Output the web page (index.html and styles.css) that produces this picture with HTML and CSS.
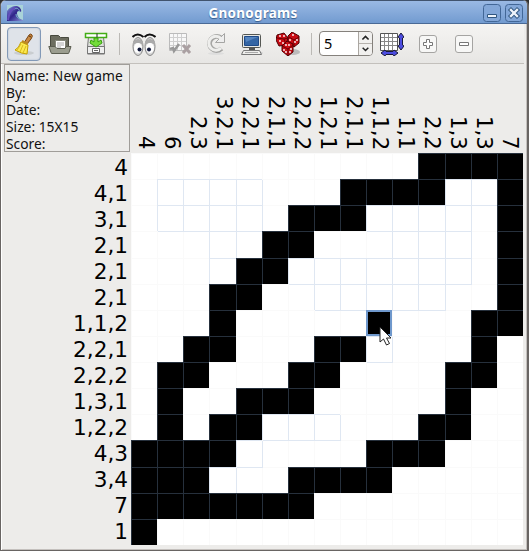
FILE: index.html
```html
<!DOCTYPE html>
<html lang="en">
<head>
<meta charset="utf-8">
<title>Gnonograms</title>
<link rel="stylesheet" href="styles.css">
</head>
<body>
<div class="window">
  <header class="titlebar">
    <svg class="appicon" width="16" height="16" viewBox="0 0 16 16"><defs><linearGradient id="wave" x2="1" y2="1"><stop stop-color="#8193db"/><stop offset=".5" stop-color="#30248a"/><stop offset="1" stop-color="#8495d7"/></linearGradient></defs><path fill="#a9d3d9" d="M0 0h16v16H0z"/><path fill="url(#wave)" d="M0 16V6C2 3 5 1 10 1c3 1 5 4 4 6-2-2-4-1-4 1 0 3 2 6 6 7v1z"/><path d="M7 4c4-2 6 1 5 3M9 9c0 3 2 4 4 5" fill="none" stroke="#75b6ca"/><path d="M1 15C2 8 4 4 8 3" fill="none" stroke="#634ebc" stroke-width="2"/></svg>
    <h1>Gnonograms</h1>
    <div class="controls">
      <svg width="18" height="18" viewBox="0 0 18 18"><rect class="wb" x=".5" y=".5" width="17" height="17" rx="3"/><path d="M4.500 10.500h9v3h-9z" fill="#eef4fb" stroke="#315781"/></svg>
      <svg width="18" height="18" viewBox="0 0 18 18"><rect class="wb" x=".5" y=".5" width="17" height="17" rx="3"/><path d="M6 6l6 6m0-6l-6 6" stroke="#315781" stroke-width="4.400" stroke-linecap="square"/><path d="M6 6l6 6m0-6l-6 6" stroke="#eef4fb" stroke-width="2.400" stroke-linecap="square"/></svg>
    </div>
  </header>
  <nav class="toolbar">
    <span class="tool pressed"><svg width="24" height="24" viewBox="0 0 24 24"><ellipse cx="12" cy="21" rx="10" ry="2" fill="#c9cdd0"/><path d="M12.500 10L17 3q2-2 3 0 1 1-1 4l-4 5z" fill="#c88942" stroke="#7a4513"/><path d="M17 4l2 1" stroke="#5c3510"/><path d="M9 10l7 3-1 9q-5 0-12-4 4-2 6-8z" fill="#fce94f" stroke="#c4a000"/><path d="M9 12l-4 6m6-5l-3 7m6-6l-3 7" stroke="#d7b91e"/><path d="M10 9l6 3" stroke="#bd8b20" stroke-width="2"/></svg></span>
    <span class="tool"><svg width="24" height="24" viewBox="0 0 24 24"><path d="M2.500 17V3.500h8l2 2h8V17z" fill="#6d6e60" stroke="#484a3e"/><path d="M7.500 8.500h10v9h-10z" fill="#fff" stroke="#85877a"/><path d="M9 11h7m-7 2h7m-7 2h4" stroke="#aaa"/><path d="M.8 14.500H7l2 2h8l1-2h5l-2 6q0 1-1 1H4q-1 0-1-1z" fill="#9b9d8f" stroke="#5b5d50"/></svg></span>
    <span class="tool"><svg width="24" height="24" viewBox="0 0 24 24"><path d="M4.500 5h15l1 10v7h-17v-7z" fill="#dedfdc" stroke="#777"/><path d="M3.500 14.500h17v7h-17z" fill="#eee" stroke="#777"/><path d="M8.500 16.500h7v4h-7zM10 18.500h4" fill="#fff" stroke="#666"/><path d="M1.500 1.500h21v4h-21z" fill="#fff" stroke="#43ad16" stroke-width="1.500"/><path d="M13 1.500v4" stroke="#222"/><path d="M10 6h4v4l3-2 1 3-6 4-6-4 1-3 3 2z" fill="#73dc3a" stroke="#38a010"/></svg></span>
    <i class="sep s1"></i>
    <span class="tool"><svg width="24" height="24" viewBox="0 0 24 24"><g fill="#d8d8d8" stroke="#888"><ellipse cx="6" cy="14.500" rx="5" ry="9"/><ellipse cx="18" cy="14.500" rx="5" ry="9"/></g><path d="M1 10q5-6 10 0v3q-5-4-10 0zm12 0q5-6 10 0v3q-5-4-10 0z" fill="#aaa"/><path d="M.5 5q5-5 11 0m1 0q5-5 11 0" fill="none" stroke="#111" stroke-width="2"/><g fill="#fff"><ellipse cx="6" cy="16" rx="4" ry="5"/><ellipse cx="18" cy="16" rx="4" ry="5"/></g><circle cx="7.500" cy="17.500" r="2" fill="#12193a"/><circle cx="17" cy="17.500" r="2" fill="#12193a"/></svg></span>
    <span class="tool"><svg width="24" height="24" viewBox="0 0 24 24"><path d="M1.500 1.500h17v17h-17z" fill="#f8f8f8" stroke="#bbb"/><path d="M5.500 2v16m4-16v16m4-16v16M2 5.500h16m-16 4h16m-16 4h16" stroke="#cfcfcf"/><path d="M2 17l3-1 1 3 5-7" fill="none" stroke="#999" stroke-width="2.500"/><path d="M15 13l7 8m0-8l-7 8" stroke="#aaa0a2" stroke-width="3"/></svg></span>
    <span class="tool"><svg width="24" height="24" viewBox="0 0 24 24"><ellipse cx="12" cy="21.500" rx="8" ry="1.500" fill="#ddd"/><g fill="none"><path d="M17.500 16.500A7 7 0 1 1 17 6" stroke="#a5a5a3" stroke-width="5"/><path d="M11.500 10.500h9v-9z" fill="#eee" stroke="#a5a5a3"/><path d="M17 16A7 7 0 1 1 17 6.500" stroke="#eeeeec" stroke-width="3"/></g></svg></span>
    <span class="tool"><svg width="24" height="24" viewBox="0 0 24 24"><ellipse cx="12" cy="21" rx="11" ry="2" fill="#ccc"/><rect x="2.500" y="2.500" width="18" height="13" rx="1" fill="#e8e8e4" stroke="#555753"/><path d="M4.500 4.500h14v9h-14z" fill="#3465a4" stroke="#204a87"/><path d="M5 5h13L6 10z" fill="#5585c0"/><path d="M9 16h6v2H9z" fill="#555"/><path d="M3.500 18.500h16l2 4h-20z" fill="#eeeeec" stroke="#777"/><path d="M5 20.500h13" stroke="#aaa"/></svg></span>
    <span class="tool"><svg width="24" height="24" viewBox="0 0 24 24"><ellipse cx="17" cy="20" rx="7" ry="3" fill="#bbb"/><g fill="#c90c14" stroke="#4f0003"><path d="M1 3l7-2 4 5-2 7-7 1-3-6zM12 4l4-4 7 4v7l-5 4-6-5z"/><path d="M6 14l5-5 6 3v8l-5 4-6-5z"/></g><path d="M1 6l7 1 2 5m-2-5 4-1m1-1l5 3 5-3m-5 3v6M6 14l6 3 5-4m-5 4v6" fill="none" stroke="#6d0005"/><g fill="#fff"><circle cx="4" cy="4" r=".9"/><circle cx="8" cy="4" r=".9"/><circle cx="4" cy="9" r=".9"/><circle cx="7" cy="11" r=".9"/><circle cx="14" cy="8" r=".9"/><circle cx="17" cy="3" r=".9"/><circle cx="19" cy="10" r=".9"/><circle cx="21" cy="8" r=".9"/><circle cx="10" cy="13" r=".9"/><circle cx="13" cy="13" r=".9"/><circle cx="8" cy="18" r=".9"/><circle cx="10" cy="20" r=".9"/><circle cx="15" cy="17" r=".9"/><circle cx="14" cy="20" r=".9"/></g></svg></span>
    <i class="sep s2"></i>
    <div class="spin"><span class="value">5</span><div class="steps"><svg viewBox="0 0 14 13"><path d="M3.500 8.500L7 5l3.500 3.500"/></svg><svg viewBox="0 0 14 13"><path d="M3.500 4.500L7 8l3.500-3.500"/></svg></div></div>
    <span class="tool resize"><svg width="24" height="24" viewBox="0 0 24 24"><path d="M.5 1.500h17v17H.5z" fill="#fff" stroke="#555"/><path d="M4.500 2v16m4-16v16m4-16v16M1 5.500h16m-16 4h16m-16 4h16" stroke="#888"/><path d="M21 1l3 4-1.500 1v7l1.500 1-3 4-3-4 1.500-1V6L18 5zM1 21l4-3 1 1.500h7l1-1.500 4 3-4 3-1-1.500H6L5 24z" fill="#4c4ce0" stroke="#18183c"/></svg></span>
    <span class="tool"><svg width="18" height="18" viewBox="0 0 18 18"><rect class="zb" x=".5" y=".5" width="17" height="17" rx="2.500"/><path d="M7.500 4.500h3v3h3v3h-3v3h-3v-3h-3v-3h3z" fill="#fff" stroke="#777"/></svg></span>
    <span class="tool"><svg width="18" height="18" viewBox="0 0 18 18"><rect class="zb" x=".5" y=".5" width="17" height="17" rx="2.500"/><path d="M4.500 7.500h9v3h-9z" fill="#fff" stroke="#777"/></svg></span>
  </nav>
  <main class="board">
    <section class="info"><p><span class="gamename">Name: New game</span></p><p>By:</p><p>Date:</p><p>Size: 15X15</p><p>Score:</p></section>
    <div class="cols" id="cols"></div>
    <div class="rows" id="rows"></div>
    <div class="grid" id="grid"></div>
  </main>
</div>
<script src="board.js"></script>
</body>
</html>
```
FILE: styles.css
```css
* { box-sizing: border-box; }
body { margin: 0; background: #303030; font-family: "Liberation Sans", sans-serif; overflow: hidden; }
.window { width: 529px; height: 551px; border: 1px solid #696563; border-right-width: 2px; border-top: 0; border-radius: 6px 6px 0 0; background: #edecea; overflow: hidden; box-shadow: inset 1px 0 #fff, inset -1px -1px #c4c0bd; }
.titlebar { height: 24px; display: flex; align-items: center; padding: 1px 4px 0 6px; background: linear-gradient(#9ab9e4, #729bd0); border-top: 1px solid #41536e; border-bottom: 1px solid #4a6a96; }
.appicon { flex: none; }
h1 { flex: 1; margin: 0; padding-right: 0; text-align: center; color: #fff; font: bold 13.500px "Noto Sans", sans-serif; letter-spacing: .25px; line-height: 20px; text-shadow: 0 1px 1px #365b8b; }
.controls { display: flex; gap: 4px; }
.wb { fill: #83a7d8; stroke: #426797; }
.toolbar { height: 40px; display: flex; align-items: center; padding: 2px 0 2px 6px; background: linear-gradient(#f5f4f2, #e7e6e4); border-bottom: 1px solid #c3c0bc; margin: 0 3px 0 0; }
.tool { width: 36px; height: 34px; flex: none; display: flex; align-items: center; justify-content: center; }
.pressed { width: 34px; margin-right: 1px; border: 1px solid #8299b7; border-radius: 4px; background: #dfe3e9; box-shadow: inset 0 0 2px #a9b8ca; }
.sep { width: 1px; height: 22px; flex: none; background: #bbb9b5; }
.s1 { margin: 0 6px 0 5px; }
.s2 { margin: 0 7px 0 5px; }
.spin { width: 54px; height: 25px; display: flex; flex: none; border: 1px solid #85817c; border-radius: 4px; background: #fff; overflow: hidden; }
.value { flex: 1; padding-left: 4px; font: 14.500px/23px "Noto Sans", sans-serif; }
.steps { width: 14px; display: flex; flex-direction: column; background: #f1f0ee; border-left: 1px solid #aaa6a1; }
.steps svg { width: 13px; height: 12px; fill: none; stroke: #222; stroke-width: 1.800; }
.steps svg + svg { border-top: 1px solid #b5b1ac; }
.resize { margin-left: 1px; }
.zb { fill: #f7f7f6; stroke: #a5a4a2; }
.board { display: grid; grid-template-columns: 127px 392px; grid-template-rows: 89px 392px; margin-left: 3px; }
.info { width: 126px; height: 88px; border: 1px solid #a09d99; padding: 2px 0 0 1px; font: 13.800px/17px "Noto Sans", sans-serif; color: #111; white-space: nowrap; }
.info p { margin: 0; }
.gamename { letter-spacing: .1px; }
.cols { display: flex; justify-content: flex-start; align-items: flex-end; padding: 0 0 3px 2px; }
.cols span { width: 26px; flex: none; writing-mode: vertical-rl; font: 21.300px/26px "DejaVu Sans", sans-serif; text-align: right; }
.rows { text-align: right; padding: 2px 3px 0 0; font: 21.600px/26px "DejaVu Sans", sans-serif; }
.rows span { display: block; height: 26px; }
.grid { display: grid; grid-template-columns: repeat(15, 1fr); grid-template-rows: repeat(15, 1fr); background: #fff; }
.cell { position: relative; border-left: 1px solid #fafafa; border-top: 1px solid #fafafa; }
.outlined { z-index: 1; border-color: #dfe7f2; box-shadow: 1px 1px #dfe7f2; }
.filled { z-index: 2; background: #000; border-color: #26303c; }
.active { z-index: 3; border: 2px solid #6f98cc; }
.pointer { position: absolute; left: 11px; top: 14px; }
```
FILE: board.js
```javascript
// '#' filled, 'o' empty with a visible outline, '.' empty, '@' cell under the pointer
const cells = [
  "...........####",
  ".oooo...####oo#",
  ".oooo.###oooo.#",
  "...oo##...ooo.#",
  "...o##ooooooo.#",
  "...##..ooooo..#",
  "...#.....@...##",
  "..##...##o...#.",
  ".##...##....##.",
  ".#..###.....#..",
  ".#.##ooo...##..",
  "####o....###...",
  "###o..####.....",
  "#######........",
  "#.............."
];
const columnClues = ["4", "6", "2,3", "3,2,1", "2,2,1", "2,1,1", "2,2,2", "1,2,1", "2,1,1", "1,1,2", "1,1", "2,2", "1,3", "1,3", "7"];
const rowClues = ["4", "4,1", "3,1", "2,1", "2,1", "2,1", "1,1,2", "2,2,1", "2,2,2", "1,3,1", "1,2,2", "4,3", "3,4", "7", "1"];
const kinds = { "#": "cell filled", "o": "cell outlined", ".": "cell", "@": "cell filled active" };
const pointer = '<svg class="pointer" width="14" height="21" viewBox="0 0 14 21"><path d="M1 1v15l3.500-3 3 6 3-1.500-3-5.500H12z" fill="#fff" stroke="#222"/></svg>';
const spans = list => list.map(t => `<span>${t}</span>`).join("");
document.getElementById("cols").innerHTML = spans(columnClues);
document.getElementById("rows").innerHTML = spans(rowClues);
document.getElementById("grid").innerHTML = [...cells.join("")]
  .map(c => `<div class="${kinds[c]}">${c === "@" ? pointer : ""}</div>`).join("");
```
